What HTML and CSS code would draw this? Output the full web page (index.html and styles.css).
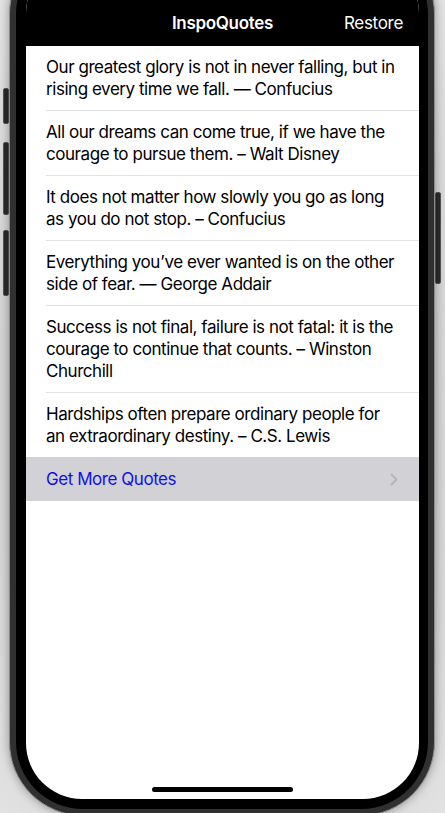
FILE: index.html
```html
<!DOCTYPE html>
<html lang="en">
<head>
<meta charset="utf-8">
<title>InspoQuotes</title>
<link rel="stylesheet" href="styles.css">
</head>
<body>
  <div class="stage">
    <div class="btn btn-l1"></div>
    <div class="btn btn-l2"></div>
    <div class="btn btn-l3"></div>
    <div class="btn btn-r1"></div>
    <div class="phone">
      <div class="bezel">
        <div class="screen">
          <header class="navbar">
            <span class="nav-spacer"></span>
            <span class="nav-title">InspoQuotes</span>
            <span class="nav-action">Restore</span>
          </header>
          <ul class="list">
            <li class="row">Our greatest glory is not in never falling, but in rising every time we fall. — Confucius</li>
            <li class="row">All our dreams can come true, if we have the courage to pursue them. – Walt Disney</li>
            <li class="row">It does not matter how slowly you go as long as you do not stop. – Confucius</li>
            <li class="row">Everything you’ve ever wanted is on the other side of fear. — George Addair</li>
            <li class="row">Success is not final, failure is not fatal: it is the courage to continue that counts. – Winston Churchill</li>
            <li class="row row-last">Hardships often prepare ordinary people for an extraordinary destiny. – C.S. Lewis</li>
            <li class="more">
              <span class="more-label">Get More Quotes</span>
              <svg class="chevron" width="8" height="13" viewBox="0 0 8 13"><path d="M1.5 1.5 L6.5 6.5 L1.5 11.5" fill="none" stroke="#b4b4b9" stroke-width="2" stroke-linecap="round" stroke-linejoin="round"/></svg>
            </li>
          </ul>
          <div class="home-indicator"></div>
        </div>
      </div>
    </div>
  </div>
</body>
</html>
```

FILE: styles.css
```css
* { box-sizing: border-box; }

html, body {
  margin: 0;
  padding: 0;
  height: 813px;
  overflow: hidden;
}

body {
  background: radial-gradient(ellipse at center, #c4c4c4 0%, #cfcfcf 60%, #e2e2e2 100%);
  font-family: Inter, "Noto Sans", "Liberation Sans", sans-serif;
}

.stage {
  position: relative;
  width: 445px;
  height: 813px;
}

.phone {
  position: absolute;
  left: 9px;
  top: -60px;
  width: 426px;
  height: 876px;
  border-radius: 74px;
  background: #303030;
  border: 1px solid #8c8c8c;
  padding: 6px 6px 6px 6px;
  box-shadow: 0 0 10px rgba(0, 0, 0, 0.35);
}

.bezel {
  width: 100%;
  height: 100%;
  background: #000;
  border-radius: 67px;
  padding: 10px 9px 10px 10px;
}

.screen {
  position: relative;
  width: 393px;
  height: 842px;
  background: #fff;
  border-radius: 56px;
  overflow: hidden;
  display: flex;
  flex-direction: column;
}

.navbar {
  flex: none;
  height: 89px;
  padding-top: 43px;
  background: #000;
  color: #fff;
  display: grid;
  grid-template-columns: 1fr auto 1fr;
  align-items: center;
  font-size: 17px;
}

.nav-title {
  font-weight: 600;
  letter-spacing: -0.3px;
}

.nav-action {
  justify-self: end;
  padding-right: 16px;
  letter-spacing: -0.3px;
}

.list {
  list-style: none;
  margin: 0;
  padding: 0;
}

.row {
  margin-left: 20px;
  padding: 10px 20px 10px 0;
  border-bottom: 1px solid #e2e2e4;
  font-size: 17px;
  line-height: 22px;
  color: #000;
  letter-spacing: -0.45px;
}

.row-last {
  border-bottom: none;
}

.more {
  height: 44px;
  background: #d1d1d6;
  display: flex;
  align-items: center;
  justify-content: space-between;
  padding: 0 20px 0 20px;
  font-size: 17px;
  color: #1010e8;
  letter-spacing: -0.45px;
}

.chevron {
  display: block;
  margin-right: 1px;
}

.home-indicator {
  position: absolute;
  left: 126px;
  bottom: 7px;
  width: 141px;
  height: 5px;
  border-radius: 3px;
  background: #000;
}

.btn {
  position: absolute;
  width: 6px;
  background: #2a2a2a;
  border: 1px solid #555;
  border-radius: 2px;
}

.btn-l1 { left: 3px; top: 88px; height: 36px; }
.btn-l2 { left: 3px; top: 142px; height: 73px; }
.btn-l3 { left: 3px; top: 230px; height: 66px; }
.btn-r1 { left: 435px; top: 192px; height: 92px; }
```
